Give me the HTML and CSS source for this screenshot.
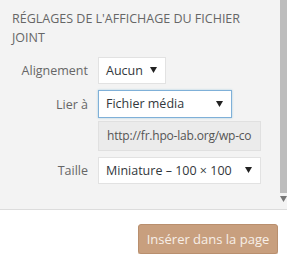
FILE: index.html
```html
<!DOCTYPE html>
<html lang="fr">
<head>
    <meta charset="UTF-8">
    <title>Réglages de l'affichage du fichier joint</title>
    <link rel="stylesheet" href="styles.css">
</head>
<body>
    <div class="sidebar">
        <div class="settings">
            <h2>Réglages de l'affichage du fichier joint</h2>

            <div class="setting-row">
                <span class="name">Alignement</span>
                <div class="select select-small">
                    <span>Aucun</span>
                    <svg class="arrow" width="7" height="6" viewBox="0 0 7 6"><path d="M0 0h7L3.5 6z" fill="#222"/></svg>
                </div>
            </div>

            <div class="setting-row">
                <span class="name">Lier à</span>
                <div class="select select-medium focused">
                    <span>Fichier média</span>
                    <svg class="arrow" width="7" height="6" viewBox="0 0 7 6"><path d="M0 0h7L3.5 6z" fill="#222"/></svg>
                </div>
            </div>

            <div class="setting-row">
                <span class="name"></span>
                <div class="link-url">http://fr.hpo-lab.org/wp-co</div>
            </div>

            <div class="setting-row">
                <span class="name">Taille</span>
                <div class="select select-wide">
                    <span>Miniature – 100 × 100</span>
                    <svg class="arrow" width="7" height="6" viewBox="0 0 7 6"><path d="M0 0h7L3.5 6z" fill="#222"/></svg>
                </div>
            </div>
        </div>

        <div class="scrollbar">
            <div class="thumb"></div>
            <svg class="scroll-down" width="7" height="6" viewBox="0 0 7 6"><path d="M0 0h7L3.5 6z" fill="#777"/></svg>
        </div>
    </div>

    <div class="toolbar">
        <button class="button-primary">Insérer dans la page</button>
    </div>
</body>
</html>
```

FILE: styles.css
```css
body {
    margin: 0;
    background: #fff;
    font-family: "Open Sans", "Noto Sans", sans-serif;
    font-size: 12.5px;
    color: #555;
}
.sidebar {
    display: flex;
    height: 209px;
    background: #f3f3f3;
    border-bottom: 1px solid #dcdcdc;
}
.settings {
    width: 280px;
}
h2 {
    margin: 9px 0 10px 12px;
    font-size: 12.5px;
    font-weight: 400;
    line-height: 19px;
    text-transform: uppercase;
    color: #666;
    width: 240px;
}
.setting-row {
    display: grid;
    grid-template-columns: 88px auto;
    column-gap: 10px;
    align-items: center;
    justify-items: start;
    margin-bottom: 6px;
}
.setting-row:nth-of-type(2) {
    margin-bottom: 3px;
}
.setting-row:nth-of-type(3) {
    margin-bottom: 6px;
}
.name {
    justify-self: end;
    color: #666;
}
.select {
    box-sizing: border-box;
    display: flex;
    align-items: center;
    justify-content: space-between;
    height: 27px;
    padding: 0 8px 1px 7px;
    background: #fff;
    border: 1px solid #e2e2e2;
    color: #32373c;
}
.select-small {
    width: 68px;
}
.select-medium {
    width: 134px;
    height: 28px;
}
.select-wide {
    width: 163px;
}
.focused {
    border-color: #7fb0d8;
    box-shadow: 0 0 2px rgba(30, 140, 190, 0.35);
}
.link-url {
    box-sizing: border-box;
    width: 163px;
    height: 30px;
    line-height: 28px;
    padding-left: 8px;
    background: #ebebeb;
    border: 1px solid #e0e0e0;
    color: #555;
    font-size: 12px;
    letter-spacing: -0.2px;
    white-space: nowrap;
    overflow: hidden;
}
.scrollbar {
    width: 7px;
    display: flex;
    flex-direction: column;
    align-items: center;
}
.thumb {
    width: 7px;
    height: 193px;
    background: #bdbdbd;
}
.scroll-down {
    margin-top: 3px;
}
.toolbar {
    display: flex;
    justify-content: flex-end;
    padding: 14px 9px 0 0;
}
.button-primary {
    box-sizing: border-box;
    width: 140px;
    height: 30px;
    padding: 0;
    background: #c89f7e;
    border: 1px solid #b98f6e;
    border-radius: 3px;
    color: #f7efe8;
    font-family: "Open Sans", "Noto Sans", sans-serif;
    font-size: 13px;
    box-shadow: 0 1px 0 #d8c0ac;
}
```
